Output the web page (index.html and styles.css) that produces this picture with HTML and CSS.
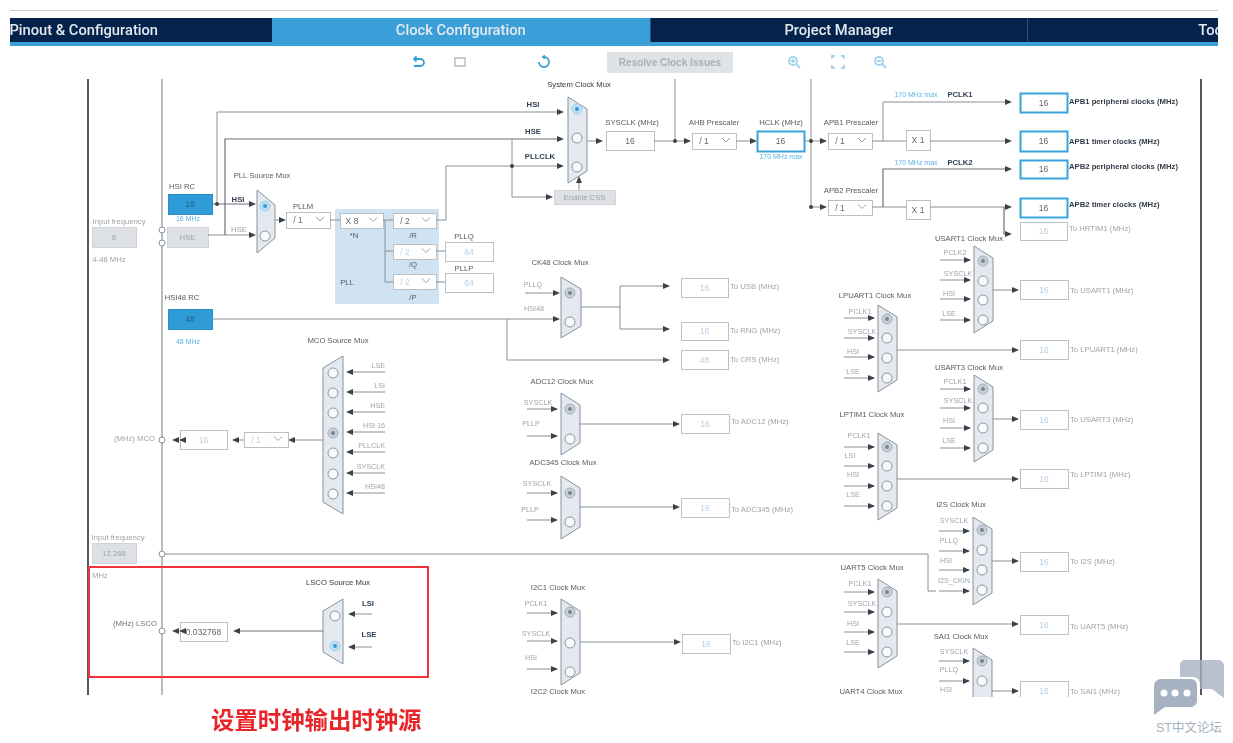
FILE: index.html
```html
<!DOCTYPE html>
<html lang="en">
  <head>
    <meta charset="UTF-8" />
    <title>Clock Configuration</title>
    <link rel="stylesheet" href="styles.css">
  </head>
  <body>
    <div class="page">
      <div class="rule"></div>

      <div class="tabs">
        <div class="tab first">Pinout &amp; Configuration</div>
        <div class="tab active">Clock Configuration</div>
        <div class="tab">Project Manager</div>
        <div class="tab">Tools</div>
      </div>

      <div class="toolbar">
        <svg class="tool undo" viewBox="0 0 14 14"><path d="M3 4h6.500a3.500 3.500 0 0 1 0 7H3M5.500 1.500 3 4l2.500 2.500"/></svg>
        <svg class="tool redo off" viewBox="0 0 14 14"><path d="M2 3h10v8H2z"/></svg>
        <svg class="tool refresh" viewBox="0 0 14 14"><path d="M6 2h1a5 5 0 1 1-5 5M8 .5 6 2l2 1.500"/></svg>
        <button class="resolve">Resolve Clock Issues</button>
        <svg class="tool zoom-in" viewBox="0 0 14 14"><circle cx="6" cy="6" r="4"/><path d="m9 9 4 4M4 6h4M6 4v4"/></svg>
        <svg class="tool fit" viewBox="0 0 14 14"><path d="M1 4V1h3M10 1h3v3M13 10v3h-3M4 13H1v-3"/></svg>
        <svg class="tool zoom-out" viewBox="0 0 14 14"><circle cx="6" cy="6" r="4"/><path d="m9 9 4 4M4 6h4"/></svg>
      </div>

      <svg id="diagram" class="diagram" viewBox="0 78 1233 619" width="1233" height="619"></svg>

      <h2 class="note">设置时钟输出时钟源</h2>

      <div class="forum">
        <svg class="forum-icon" viewBox="0 0 70 55">
          <path class="back" d="M31 0h33a6 6 0 0 1 6 6v32L58 29H46v-5a7 7 0 0 0-7-7H26V5a5 5 0 0 1 5-5z"/>
          <path class="front" d="M7 19h30a6 6 0 0 1 6 6v16a6 6 0 0 1-6 6H11L0 55V26a7 7 0 0 1 7-7z"/>
          <circle cx="10" cy="33" r="3.500"/>
          <circle cx="21" cy="33" r="3.500"/>
          <circle cx="33" cy="33" r="3.500"/>
        </svg>
        <span class="forum-name">ST中文论坛</span>
      </div>
    </div>

    <script src="script.js"></script>
  </body>
</html>
```

FILE: styles.css
```css
body {
  margin: 0;
  background: #fff;
  font-family: "Liberation Sans", Arial, sans-serif;
}

.page {
  position: relative;
  width: 1233px;
  height: 743px;
  padding-top: 10px;
  box-sizing: border-box;
  overflow: hidden;
}

.rule {
  height: 1px;
  margin: 0 15px 0 10px;
  background: #c3ccd6;
}

.tabs {
  display: flex;
  width: 1208px;
  height: 24px;
  margin: 7px 0 0 10px;
  border-bottom: 4px solid #3a9fd8;
  overflow: hidden;
}

.tab {
  flex: 0 0 377.500px;
  box-sizing: border-box;
  border-left: 1px solid #35506f;
  background: #03224c;
  color: #e4e9ef;
  font-family: Roboto, sans-serif;
  font-size: 14.700px;
  font-weight: 500;
  line-height: 24px;
  text-align: center;
  filter: blur(0.5px);
}

.tab.first {
  margin-left: -115.500px;
}

.tab.active {
  border-left: none;
  background: #3a9fd8;
}

.toolbar {
  display: flex;
  align-items: center;
  height: 32px;
  padding-left: 411px;
}

.tool {
  width: 14px;
  height: 14px;
  fill: none;
  stroke: #3a9fd8;
  stroke-width: 1.800;
  filter: blur(0.7px);
}

.tool.off {
  stroke: #c5cbd1;
}

.redo {
  margin-left: 28px;
}

.refresh {
  margin-left: 70px;
}

.zoom-in {
  margin-left: 54px;
  stroke: #a3d2ec;
}

.fit {
  margin-left: 30px;
  stroke: #a3d2ec;
}

.zoom-out {
  margin-left: 28px;
  stroke: #a3d2ec;
}

.resolve {
  width: 126px;
  height: 21px;
  margin-left: 56px;
  padding: 0;
  border: none;
  background: #dfe3e6;
  color: #a9b0b6;
  font-family: inherit;
  font-size: 10px;
  font-weight: bold;
  filter: blur(0.7px);
}

.diagram {
  display: block;
  filter: blur(0.7px);
}

.diagram text {
  font-size: 7.700px;
  fill: #6d7379;
  dominant-baseline: central;
}

.diagram .label-on {
  fill: #2f3f55;
  font-weight: bold;
}

.diagram .title {
  fill: #555b61;
  text-anchor: middle;
}

.diagram .active-title {
  fill: #33393f;
  text-anchor: middle;
}

.diagram .off {
  fill: #9ea4aa;
}

.diagram .input {
  fill: #9ea4aa;
  font-size: 7.200px;
}

.diagram .hint {
  fill: #5cb3e2;
  font-size: 7px;
  text-anchor: middle;
}

.diagram .output {
  fill: #333c46;
  font-weight: bold;
}

.diagram .value {
  fill: #5f666d;
  font-size: 8.500px;
}

.diagram .value-off {
  fill: #b8cfe4;
  font-size: 8.500px;
}

.diagram .value-on {
  fill: #1f5f85;
  font-size: 8.500px;
}

.wire {
  fill: none;
  stroke: #8a8f94;
  stroke-width: 1;
}

.wire.strong {
  stroke: #6d7277;
  stroke-width: 1.200;
}

.wire.bus {
  stroke: #c4c7ca;
  stroke-width: 2;
}

.rail {
  stroke: #55595e;
  stroke-width: 2;
}

.rail.thin {
  stroke: #a3a7ab;
  stroke-width: 1.500;
}

.arrow {
  fill: #3d4146;
}

.pin {
  fill: #fff;
  stroke: #8d9297;
}

.box {
  fill: #fff;
  stroke: #bcc0c4;
}

.box.on {
  stroke: #38a5dc;
  stroke-width: 2;
}

.box.grey {
  fill: #dde1e5;
  stroke: #d0d4d8;
}

.box.source {
  fill: #2f9bd7;
  stroke: #2a8ec6;
}

.chevron {
  fill: none;
  stroke: #9ca1a6;
}

.pll-area {
  fill: #cfe3f3;
}

.mux {
  fill: #e4e9ef;
  stroke: #87929d;
}

.radio {
  fill: #f7f9fb;
  stroke: #8d969f;
}

.radio-dot {
  fill: #7a838c;
}

.radio-ring {
  fill: #c6d0da;
  stroke: #a4adb6;
}

.radio-blue {
  fill: #bfe0f3;
  stroke: #9fd0ec;
}

.radio-blue-dot {
  fill: #2f9bd7;
}

.highlight {
  fill: none;
  stroke: #f2333a;
  stroke-width: 2;
}

.note {
  margin: 0;
  padding: 9px 0 0 211px;
  color: #e8262a;
  font-family: "Noto Sans CJK SC", sans-serif;
  font-size: 23.400px;
  font-weight: bold;
  line-height: 26px;
  filter: blur(0.4px);
}

.forum {
  position: absolute;
  top: 660px;
  left: 1154px;
  display: flex;
  flex-direction: column;
  align-items: center;
  width: 70px;
}

.forum-icon {
  width: 70px;
  height: 55px;
  fill: #fff;
}

.forum-icon .back,
.forum-icon .front {
  fill: #a6b2c1;
}

.forum-icon .back {
  opacity: 0.8;
}

.forum-name {
  margin-top: 2px;
  color: #a6b2c1;
  font-family: "Liberation Sans", "Noto Sans CJK SC", sans-serif;
  font-size: 12.500px;
  white-space: nowrap;
}
```

FILE: script.js
```js
const svg = document.getElementById("diagram");
const NS = "http://www.w3.org/2000/svg";

function add(tag, attrs, text) {
  const el = document.createElementNS(NS, tag);
  for (const key in attrs) el.setAttribute(key, attrs[key]);
  if (text) el.textContent = text;
  svg.appendChild(el);
  return el;
}

function wire(points, cls = "wire") {
  add("polyline", { class: cls, points });
}

function arrow(x, y, dir = 1) {
  // x is the tip of the arrow, dir 1 points right, -1 left
  add("path", {
    class: "arrow",
    d: `M${x} ${y}l${-7 * dir} -3v6z`,
  });
}

function label(x, y, text, cls = "", anchor) {
  const attrs = { x, y, class: cls };
  if (anchor) attrs["text-anchor"] = anchor;
  add("text", attrs, text);
}

function box(x, y, w, h, value, cls = "", valueCls = "value") {
  add("rect", { class: "box " + cls, x: x + 0.5, y: y + 0.5, width: w, height: h });
  if (value) label(x + w / 2, y + h / 2, value, valueCls, "middle");
}

function select(x, y, w, h, value, off) {
  box(x, y, w, h);
  label(x + 12, y + h / 2, value, off ? "value-off" : "value", "middle");
  const cx = x + w - 10;
  const cy = y + h / 2 - 1;
  add("path", { class: "chevron", d: `M${cx - 4} ${cy - 2}l4 4 4-4` });
}

function radio(cx, cy, state) {
  if (state === "blue") {
    add("circle", { class: "radio-blue", cx, cy, r: 5 });
    add("circle", { class: "radio-blue-dot", cx, cy, r: 2 });
  } else if (state === "grey") {
    add("circle", { class: "radio-ring", cx, cy, r: 5 });
    add("circle", { class: "radio-dot", cx, cy, r: 2 });
  } else {
    add("circle", { class: "radio", cx, cy, r: 5 });
  }
}

// mux with the narrow end on the right
function mux(x, top, bottom, w = 19, notch = 12) {
  add("polygon", {
    class: "mux",
    points: `${x},${top} ${x + w},${top + notch} ${x + w},${bottom - notch} ${x},${bottom}`,
  });
}

function muxLeft(x, top, bottom, w = 20, notch = 12) {
  add("polygon", {
    class: "mux",
    points: `${x + w},${top} ${x},${top + notch} ${x},${bottom - notch} ${x + w},${bottom}`,
  });
}

function pin(cx, cy) {
  add("circle", { class: "pin", cx, cy, r: 3 });
}

function junction(cx, cy) {
  add("circle", { class: "arrow", cx, cy, r: 2 });
}

// small peripheral mux: inputs from the left, one output into a "To X" box
function peripheral(m) {
  label(m.titleX, m.top - 12 + (m.titleDy || 0), m.title, "title");
  m.inputs.forEach(([name, lineY, labelX, labelY]) => {
    label(labelX, labelY, name, "input", "middle");
    wire(`${m.x - 34},${lineY} ${m.x - 4},${lineY}`);
    arrow(m.x - 3, lineY);
  });
  mux(m.x, m.top, m.bottom);
  m.radios.forEach((y, i) => radio(m.x + 9, y, i === 0 ? "grey" : null));
  wire(`${m.x + 19},${m.out} ${m.boxX - 8},${m.out}`);
  arrow(m.boxX - 1, m.out);
  box(m.boxX, m.boxY, 48, 19, m.value || "16", "", "value-off");
  label(m.boxX + 50, m.textY, m.to, "off");
}

/* rails */
add("line", { class: "rail", x1: 88, y1: 79, x2: 88, y2: 695 });
add("line", { class: "rail thin", x1: 162, y1: 79, x2: 162, y2: 695 });
add("line", { class: "rail", x1: 1201, y1: 79, x2: 1201, y2: 695 });
wire("675,79 675,141");
wire("811,79 811,207");

/* sources */
label(119, 221, "Input frequency", "off", "middle");
box(92, 227, 44, 20, "8", "grey", "off");
label(109, 259, "4-48 MHz", "off", "middle");
label(182, 186, "HSI RC", "title");
box(168, 194, 44, 20, "16", "source", "value-on");
label(188, 218, "16 MHz", "hint");
box(167, 227, 41, 20, "HSE", "grey", "off");
pin(162, 230);
pin(162, 243);

wire("212,204 249,204", "wire strong");
wire("208,235 249,235");
wire("217,204 217,112 557,112");
wire("225,235 225,139 557,139", "wire strong");
junction(217, 204);
arrow(564, 112);
arrow(564, 139);
arrow(256, 204);
arrow(256, 235);
label(238, 199, "HSI", "label-on", "middle");
label(239, 229, "HSE", "off", "middle");

/* pll */
label(262, 175, "PLL Source Mux", "title");
mux(257, 190, 253, 18, 15);
radio(265, 206, "blue");
radio(265, 236);
wire("275,220 280,220");
arrow(286, 220);
label(303, 206, "PLLM", "title");
select(286, 212, 44, 16, "/ 1");

add("rect", { class: "pll-area", x: 335, y: 209, width: 104, height: 95 });
wire("330,220 340,220");
select(340, 213, 43, 15, "X 8");
wire("383,220 393,220");
wire("385,220 385,282 393,282");
wire("385,251 393,251");
select(393, 213, 43, 15, "/ 2");
select(393, 244, 43, 15, "/ 2", true);
select(393, 274, 43, 15, "/ 2", true);
label(354, 235, "*N", "title");
label(413, 235, "/R", "title");
label(413, 264, "/Q", "title");
label(413, 297, "/P", "title");
label(347, 282, "PLL", "title");
wire("436,251 445,251");
wire("436,282 445,282");
label(464, 236, "PLLQ", "title");
label(464, 268, "PLLP", "title");
box(445, 242, 48, 19, "64", "", "value-off");
box(445, 273, 48, 19, "64", "", "value-off");
wire("436,220 446,220 446,166 557,166");
arrow(564, 166);
wire("512,139 512,197 547,197");
junction(512, 166);
arrow(553, 197);
box(554, 190, 61, 14, "Enable CSS", "grey", "off");

/* system clock */
label(579, 84, "System Clock Mux", "active-title");
label(533, 104, "HSI", "label-on", "middle");
label(533, 131, "HSE", "label-on", "middle");
label(540, 156, "PLLCLK", "label-on", "middle");
mux(568, 97, 183, 19, 12);
radio(577, 109, "blue");
radio(577, 138);
radio(577, 167);
add("path", { class: "arrow", d: "M579 176l-3 7h6z" });
wire("579,183 579,190");
wire("587,141 596,141");
arrow(603, 141);
label(632, 122, "SYSCLK (MHz)", "title");
box(606, 131, 48, 19, "16");
wire("654,141 685,141");
junction(675, 141);
arrow(691, 141);
label(714, 122, "AHB Prescaler", "title");
select(692, 133, 44, 16, "/ 1");
wire("736,141 750,141");
arrow(757, 141);
label(781, 122, "HCLK (MHz)", "title");
box(757, 131, 47, 20, "16", "on");
label(781, 156, "170 MHz max", "hint");
wire("804,141 821,141");
junction(811, 141);
arrow(827, 141);
label(851, 122, "APB1 Prescaler", "title");
select(828, 133, 44, 16, "/ 1");
wire("872,141 906,141");
wire("883,141 883,102 1005,102");
arrow(1012, 102);
label(916, 94, "170 MHz max", "hint");
label(960, 94, "PCLK1", "label-on", "middle");
box(906, 130, 24, 20, "X 1");
wire("930,141 1005,141");
arrow(1012, 141);
box(1020, 93, 47, 19, "16", "on");
box(1020, 131, 47, 20, "16", "on");
label(1069, 101, "APB1 peripheral clocks (MHz)", "output");
label(1069, 141, "APB1 timer clocks (MHz)", "output");

wire("811,207 821,207");
junction(811, 207);
arrow(827, 207);
label(851, 190, "APB2 Prescaler", "title");
select(828, 200, 44, 15, "/ 1");
wire("872,207 906,207");
wire("883,207 883,169 1005,169", "wire strong");
arrow(1012, 169);
label(916, 162, "170 MHz max", "hint");
label(960, 162, "PCLK2", "label-on", "middle");
box(906, 200, 24, 19, "X 1");
wire("930,207 1005,207");
arrow(1012, 207);
wire("1004,207 1004,234 1005,234", "wire strong");
arrow(1012, 234);
box(1020, 160, 47, 18, "16", "on");
box(1020, 198, 47, 19, "16", "on");
box(1020, 222, 47, 18, "16", "", "value-off");
label(1069, 166, "APB2 peripheral clocks (MHz)", "output");
label(1069, 204, "APB2 timer clocks (MHz)", "output");
label(1069, 228, "To HRTIM1 (MHz)", "off");

/* hsi48 and ck48 */
label(182, 297, "HSI48 RC", "title");
box(168, 309, 44, 20, "48", "source", "value-on");
label(188, 341, "48 MHz", "hint");
wire("212,319 554,319", "wire");
wire("507,319 507,360 663,360");
arrow(670, 360);
arrow(560, 319);
label(560, 262, "CK48 Clock Mux", "title");
label(533, 284, "PLLQ", "input", "middle");
label(534, 308, "HSI48", "input", "middle");
wire("525,293 553,293");
arrow(560, 293);
mux(561, 277, 338, 20, 12);
radio(570, 293, "grey");
radio(570, 322);
wire("581,307 620,307");
wire("663,286 620,286 620,329 663,329");
arrow(670, 286);
arrow(670, 329);
box(681, 278, 47, 19, "16", "", "value-off");
box(681, 322, 47, 18, "16", "", "value-off");
box(681, 350, 47, 19, "48", "", "value-off");
label(730, 286, "To USB (MHz)", "off");
label(730, 330, "To RNG (MHz)", "off");
label(730, 359, "To CRS (MHz)", "off");

/* mco */
label(338, 340, "MCO Source Mux", "title");
muxLeft(323, 356, 514);
const mcoInputs = ["LSE", "LSI", "HSE", "HSI 16", "PLLCLK", "SYSCLK", "HSI48"];
mcoInputs.forEach((name, i) => {
  const y = 372 + Math.round(i * 20.1);
  radio(333, y + 1, i === 3 ? "grey" : null);
  arrow(346, y, -1);
  wire(`353,${y} 385,${y}`);
  label(385, y - 7, name, "input", "end");
});
wire("323,440 295,440");
arrow(288, 440, -1);
select(244, 432, 44, 15, "/ 1", true);
wire("239,440 244,440");
arrow(232, 440, -1);
box(180, 430, 47, 19, "16", "", "value-off");
arrow(172, 440, -1);
arrow(179, 440, -1);
pin(162, 440);
label(155, 438, "(MHz) MCO", "off", "end");

/* adc */
[
  {
    title: "ADC12 Clock Mux", titleX: 562, x: 561, top: 393, bottom: 455,
    inputs: [["SYSCLK", 409, 538, 402], ["PLLP", 436, 531, 423]],
    radios: [409, 439], out: 424, boxX: 681, boxY: 414, to: "To ADC12 (MHz)", textY: 421,
  },
  {
    title: "ADC345 Clock Mux", titleX: 563, x: 561, top: 476, bottom: 539, titleDy: -2,
    inputs: [["SYSCLK", 493, 537, 483], ["PLLP", 520, 530, 509]],
    radios: [493, 522], out: 507, boxX: 681, boxY: 498, to: "To ADC345 (MHz)", textY: 509,
  },
  {
    title: "I2C1 Clock Mux", titleX: 558, x: 561, top: 599, bottom: 685,
    inputs: [["PCLK1", 613, 536, 603], ["SYSCLK", 641, 536, 633], ["HSI", 669, 531, 657]],
    radios: [612, 643, 672], out: 642, boxX: 682, boxY: 634, to: "To I2C1 (MHz)", textY: 642,
  },
  {
    title: "USART1 Clock Mux", titleX: 969, x: 974, top: 246, bottom: 333, titleDy: 4,
    inputs: [["PCLK2", 260, 955, 252], ["SYSCLK", 280, 958, 273], ["HSI", 299, 949, 293], ["LSE", 320, 949, 313]],
    radios: [261, 281, 300, 320], out: 290, boxX: 1020, boxY: 280, to: "To USART1 (MHz)", textY: 290,
  },
  {
    title: "LPUART1 Clock Mux", titleX: 875, x: 878, top: 305, bottom: 392, titleDy: 2,
    inputs: [["PCLK1", 318, 860, 311], ["SYSCLK", 338, 862, 331], ["HSI", 357, 853, 351], ["LSE", 378, 853, 371]],
    radios: [319, 338, 358, 378], out: 350, boxX: 1020, boxY: 340, to: "To LPUART1 (MHz)", textY: 349,
  },
  {
    title: "USART3 Clock Mux", titleX: 969, x: 974, top: 375, bottom: 462, titleDy: 4,
    inputs: [["PCLK1", 389, 955, 381], ["SYSCLK", 408, 958, 400], ["HSI", 428, 949, 420], ["LSE", 448, 949, 440]],
    radios: [389, 408, 428, 448], out: 419, boxX: 1020, boxY: 410, to: "To USART3 (MHz)", textY: 419,
  },
  {
    title: "LPTIM1 Clock Mux", titleX: 872, x: 878, top: 433, bottom: 520, titleDy: -7,
    inputs: [["PCLK1", 447, 859, 435], ["LSI", 466, 850, 455], ["HSI", 486, 853, 474], ["LSE", 506, 853, 494]],
    radios: [447, 466, 486, 506], out: 479, boxX: 1020, boxY: 469, to: "To LPTIM1 (MHz)", textY: 474,
  },
  {
    title: "I2S Clock Mux", titleX: 961, x: 973, top: 517, bottom: 605, titleDy: -1,
    inputs: [["SYSCLK", 531, 954, 520], ["PLLQ", 551, 949, 540], ["HSI", 570, 946, 560], ["I2S_CKIN", 591, 954, 580]],
    radios: [530, 550, 570, 590], out: 561, boxX: 1020, boxY: 552, to: "To I2S (MHz)", textY: 561,
  },
  {
    title: "UART5 Clock Mux", titleX: 872, x: 878, top: 579, bottom: 668,
    inputs: [["PCLK1", 592, 860, 583], ["SYSCLK", 612, 862, 603], ["HSI", 632, 853, 623], ["LSE", 652, 853, 642]],
    radios: [592, 612, 632, 652], out: 624, boxX: 1020, boxY: 615, to: "To UART5 (MHz)", textY: 626,
  },
  {
    title: "SAI1 Clock Mux", titleX: 961, x: 973, top: 648, bottom: 735,
    inputs: [["SYSCLK", 661, 954, 651], ["PLLQ", 681, 949, 669], ["HSI", 701, 946, 689]],
    radios: [661, 681], out: 691, boxX: 1020, boxY: 681, to: "To SAI1 (MHz)", textY: 691,
  },
].forEach(peripheral);

label(558, 691, "I2C2 Clock Mux", "title");
label(871, 691, "UART4 Clock Mux", "title");

/* i2s clock input */
label(118, 537, "Input frequency", "off", "middle");
box(92, 543, 44, 20, "12.288", "grey", "off");
label(100, 575, "MHz", "off", "middle");
wire("162,554 928,554", "wire bus");
wire("928,554 928,591 936,591");
pin(162, 554);

/* lsco */
label(338, 582, "LSCO Source Mux", "active-title");
muxLeft(323, 599, 664);
radio(335, 616);
radio(335, 646, "blue");
label(368, 603, "LSI", "label-on", "middle");
label(369, 634, "LSE", "label-on", "middle");
arrow(348, 614, -1);
arrow(348, 647, -1);
wire("355,614 372,614");
wire("355,647 372,647");
wire("323,631 240,631", "wire strong");
arrow(233, 631, -1);
box(180, 622, 47, 19, "0.032768");
arrow(172, 631, -1);
arrow(179, 631, -1);
pin(162, 631);
label(157, 623, "(MHz) LSCO", "", "end");

add("rect", { class: "highlight", x: 89, y: 567, width: 339, height: 110 });
```
